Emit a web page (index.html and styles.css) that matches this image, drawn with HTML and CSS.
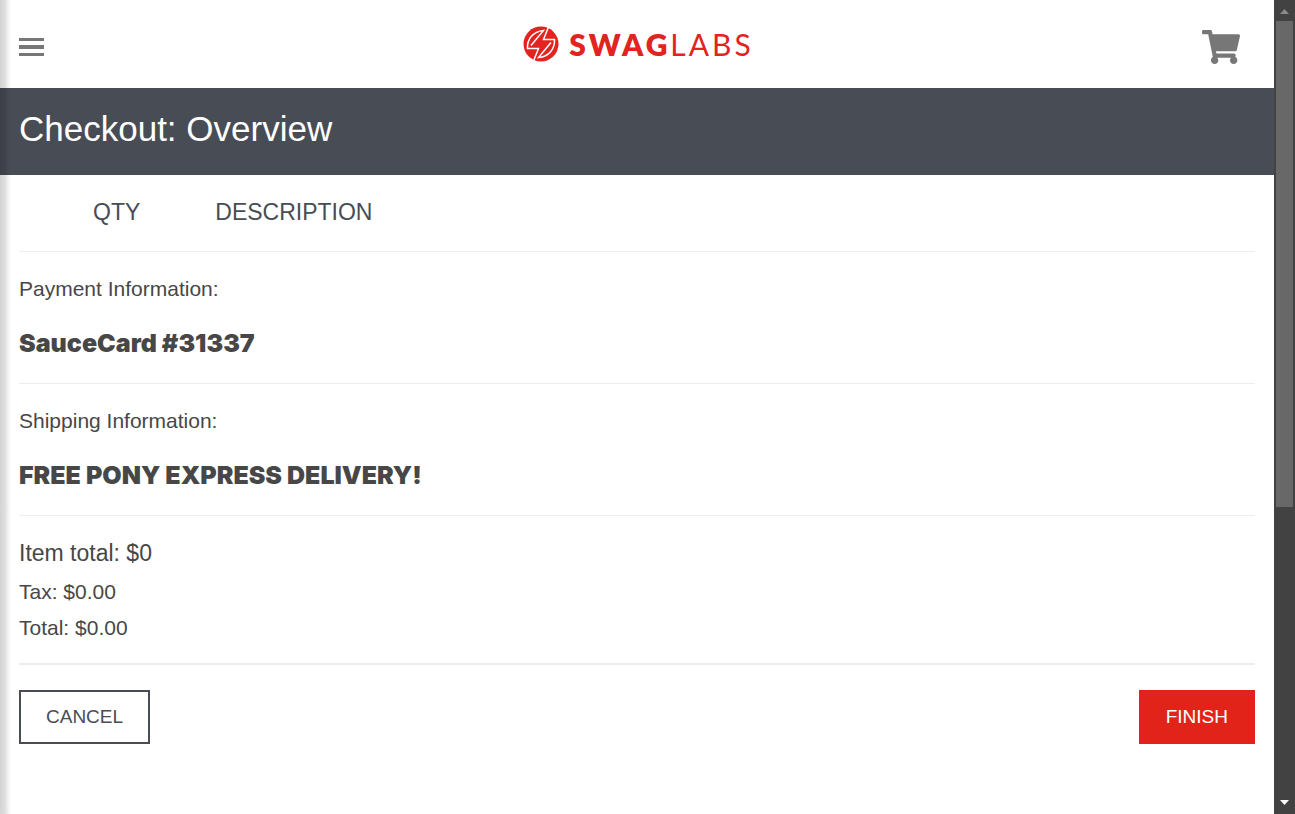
FILE: index.html
```html
<!DOCTYPE html>
<html lang="en">
<head>
<meta charset="utf-8">
<meta name="viewport" content="width=device-width, initial-scale=1">
<title>Swag Labs</title>
<link rel="stylesheet" href="styles.css">
</head>
<body>
<div class="window">
  <div class="page">
    <div class="drawer-shadow"></div>
    <header class="topbar">
      <button class="icon-button menu-button" type="button" aria-label="Open Menu">
        <svg width="25" height="18" viewBox="0 0 25 18" fill="#777"><path d="M0 0h25v3H0zM0 7h25v4H0zM0 15h25v3H0z"/></svg>
      </button>
      <div class="logo">
        <svg width="36" height="36" viewBox="0 0 36 36">
          <circle cx="18" cy="18" r="17.500" fill="#e2231f"/>
          <g fill="none" stroke="#fff" stroke-width="1.500" stroke-linejoin="miter">
            <path d="M25.500 1L20.500 13.500H31.500C32 23 26 30.500 15.500 31.500L28 16.500"/>
            <path d="M10.500 35L15.500 22.500H4.500C4 13 10 5.500 20.500 4.500L8 19.500"/>
          </g>
        </svg>
        <span class="wordmark"><span class="wordmark-strong">SWAG</span><span class="wordmark-light">LABS</span></span>
      </div>
      <a class="cart" href="#cart" aria-label="Shopping cart">
        <svg width="38" height="34" viewBox="0 0 576 512" preserveAspectRatio="none" fill="#777"><path d="M528.120 301.319l47.273-208C578.806 78.301 567.391 64 551.990 64H159.208l-9.166-44.810C147.758 8.021 137.930 0 126.529 0H24C10.745 0 0 10.745 0 24v16c0 13.255 10.745 24 24 24h69.883l70.248 343.435C147.325 417.100 136 435.222 136 456c0 30.928 25.072 56 56 56s56-25.072 56-56c0-15.674-6.447-29.835-16.824-40h209.647C430.447 426.165 424 440.326 424 456c0 30.928 25.072 56 56 56s56-25.072 56-56c0-22.172-12.888-41.332-31.579-50.405l5.517-24.276c3.413-15.018-8.002-29.319-23.403-29.319H218.117l-6.545-32h293.145c11.206 0 20.920-7.754 23.403-18.681z"/></svg>
      </a>
    </header>
    <div class="title-bar"><h1 class="title">Checkout: Overview</h1></div>
    <main class="content">
      <div class="list-head"><span>QTY</span><span>DESCRIPTION</span></div>
      <section class="info">
        <div class="text">Payment Information:</div>
        <div class="value">SauceCard #31337</div>
      </section>
      <section class="info">
        <div class="text">Shipping Information:</div>
        <div class="value">FREE PONY EXPRESS DELIVERY!</div>
      </section>
      <section class="totals">
        <div class="subtotal">Item total: $0</div>
        <div class="text">Tax: $0.00</div>
        <div class="text">Total: $0.00</div>
      </section>
      <div class="actions">
        <button class="button cancel" type="button">CANCEL</button>
        <button class="button finish" type="button">FINISH</button>
      </div>
    </main>
  </div>
  <div class="scrollbar" aria-hidden="true">
    <svg class="arrow" viewBox="0 0 21 21"><path d="M6 14h9l-4.500-5z" fill="#8a8a8a"/></svg>
    <div class="track"><div class="thumb"></div></div>
    <svg class="arrow" viewBox="0 0 21 21"><path d="M6 7h9l-4.500 5z" fill="#fff"/></svg>
  </div>
</div>
</body>
</html>
```
FILE: styles.css
```css
* { box-sizing: border-box; }

body {
  margin: 0;
  font-family: "Liberation Sans", Arial, sans-serif;
  color: #484c55;
  background: #fff;
}

.window {
  display: flex;
  height: 100vh;
}

.page {
  position: relative;
  flex: 1;
  min-width: 0;
  overflow: hidden;
}

/* Shadow cast by the closed side menu */
.drawer-shadow {
  position: absolute;
  inset: 0 auto 0 0;
  width: 12px;
  pointer-events: none;
  background: linear-gradient(to right, rgba(0, 0, 0, 0.17), rgba(0, 0, 0, 0.13) 40%, rgba(0, 0, 0, 0.03) 75%, transparent);
}

.topbar {
  display: grid;
  grid-template-columns: 1fr auto 1fr;
  align-items: center;
  height: 88px;
  padding: 0 34px 0 19px;
}

.icon-button {
  justify-self: start;
  padding: 0;
  border: 0;
  background: none;
  cursor: pointer;
}

.icon-button svg,
.cart svg,
.logo svg { display: block; }

.menu-button { padding-top: 6px; }

.cart {
  justify-self: end;
  padding-top: 6px;
}

.logo {
  display: flex;
  align-items: center;
  gap: 10px;
  padding-left: 18px;
}

.wordmark {
  font-family: Lato, sans-serif;
  font-size: 30px;
  line-height: 36px;
  letter-spacing: 3px;
  color: #e2231f;
}

.wordmark-strong { font-weight: 800; }
.wordmark-light { font-weight: 400; }

.title-bar {
  height: 87px;
  padding: 21px 19px;
  background: #484c55;
}

.title {
  margin: 0;
  font-size: 35px;
  line-height: 40px;
  font-weight: 400;
  color: #fff;
}

.content { padding: 0 19px; }

.list-head {
  display: flex;
  gap: 75px;
  padding: 23px 0 25px 74px;
  border-bottom: 1px solid #ededed;
  font-size: 23px;
  line-height: 28px;
}

.info {
  display: grid;
  gap: 28px;
  padding: 25px 0 26px;
  border-bottom: 1px solid #ededed;
}

.text {
  font-size: 21px;
  line-height: 24px;
  color: #474747;
}

.value {
  font-family: "Arial Black", Inter, sans-serif;
  font-size: 25px;
  line-height: 28px;
  font-weight: 900;
  color: #474747;
}

.totals {
  display: grid;
  gap: 12px;
  padding: 22px 0 23px;
  border-bottom: 2px solid #ededed;
}

.subtotal {
  font-size: 23px;
  line-height: 30px;
  color: #474747;
}

.actions {
  display: flex;
  justify-content: space-between;
  padding: 25px 0;
}

.button {
  height: 54px;
  padding: 0 25px;
  border: 2px solid #484c55;
  font: 400 19px/22px "Liberation Sans", Arial, sans-serif;
  cursor: pointer;
}

.cancel {
  color: #484c55;
  background: #fff;
}

.finish {
  border-color: #e2231a;
  color: #fff;
  background: #e2231a;
}

.scrollbar {
  display: flex;
  flex-direction: column;
  width: 21px;
  background: #424242;
}

.arrow {
  width: 21px;
  height: 21px;
}

.track {
  flex: 1;
  padding: 0 2px;
}

.thumb {
  height: 63%;
  background: #686868;
}
```
